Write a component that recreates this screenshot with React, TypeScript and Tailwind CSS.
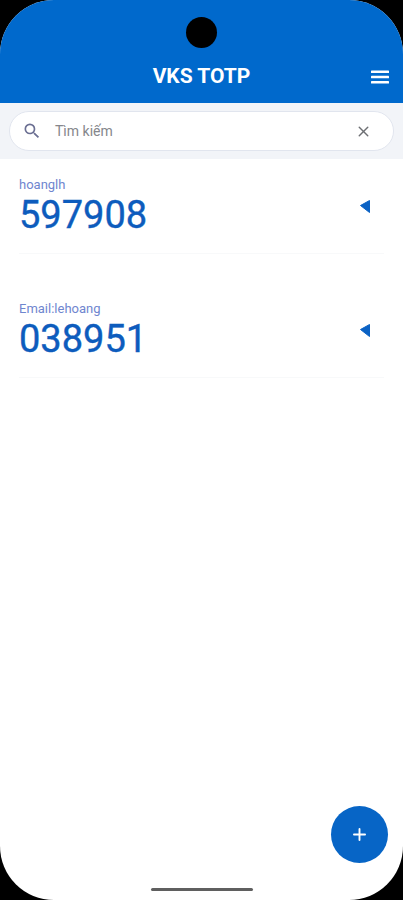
import { Plus, X } from "lucide-react";

const codes = [
    { name: "hoanglh", code: "597908" },
    { name: "Email:lehoang", code: "038951" },
];

function CodeRow({ name, code }: { name: string; code: string }) {
    return (
        <div className="mx-[19px] mb-[29px] h-[95px] border-b border-[#f8f9fa]">
            <div className="flex justify-between">
                <div>
                    <p className="pt-[19px] text-[13px] leading-[14px] text-[#6f86cf]">{name}</p>
                    <p className="mt-[1px] text-[38px] leading-[44px] text-[#0d5cbd] [-webkit-text-stroke:0.4px_#0d5cbd]">{code}</p>
                </div>
                <svg width="12" height="15" viewBox="0 0 12 15" className="mt-[40px] mr-[13px]">
                    <path d="M10.5 1.5v12L1.5 6.5z" fill="#0b62c4" stroke="#0b62c4" strokeLinejoin="round" />
                </svg>
            </div>
        </div>
    );
}

export default function App() {
    return (
        <div className="h-[900px] w-[403px] bg-black font-['Roboto',sans-serif]">
            <div className="relative flex h-full flex-col overflow-hidden rounded-[54px] bg-white">
                <div className="absolute left-[186px] top-[17px] h-[31px] w-[31px] rounded-full bg-black" />
                <header className="flex h-[103px] items-end bg-[#0069cc] pb-[14px] text-white">
                    <h1 className="w-full text-center text-[21px] font-bold leading-[26px]">VKS TOTP</h1>
                    {/* hamburger has heavier bars than the lucide one */}
                    <svg width="18" height="14" viewBox="0 0 18 14" className="absolute right-[14px] top-[69.5px]" fill="currentColor">
                        <rect width="18" height="2.6" y="0.5" rx="0.6" />
                        <rect width="18" height="2.6" y="5.7" rx="0.6" />
                        <rect width="18" height="2.6" y="10.9" rx="0.6" />
                    </svg>
                </header>
                <div className="h-[56px] bg-[#f2f4f8] px-[9px] pt-[8px]">
                    <div className="flex h-[40px] items-center rounded-full border border-[#e1e5ee] bg-white pl-[12px] pr-[21px]">
                        <svg width="20" height="20" viewBox="0 0 24 24" fill="#6b6f92">
                            <path d="M15.5 14h-.79l-.28-.27A6.471 6.471 0 0 0 16 9.5 6.5 6.5 0 1 0 9.5 16c1.61 0 3.09-.59 4.23-1.57l.27.28v.79l5 4.99L20.49 19l-4.99-5zm-6 0C7.01 14 5 11.99 5 9.5S7.01 5 9.5 5 14 7.01 14 9.5 11.99 14 9.5 14z" />
                        </svg>
                        <span className="ml-[13px] flex-1 text-[14px] text-[#85878c]">Tìm kiếm</span>
                        <X size={17} className="text-[#6d6f73]" />
                    </div>
                </div>
                <main className="flex-1">
                    {codes.map((c) => (
                        <CodeRow key={c.code} name={c.name} code={c.code} />
                    ))}
                </main>
                <button className="absolute bottom-[37px] right-[15px] flex h-[57px] w-[57px] items-center justify-center rounded-full bg-[#0765c6] text-white">
                    <Plus size={19} strokeWidth={2.4} />
                </button>
                <div className="absolute bottom-[9px] left-[151px] h-[3px] w-[102px] rounded-full bg-[#5f5f5f]" />
            </div>
        </div>
    );
}
